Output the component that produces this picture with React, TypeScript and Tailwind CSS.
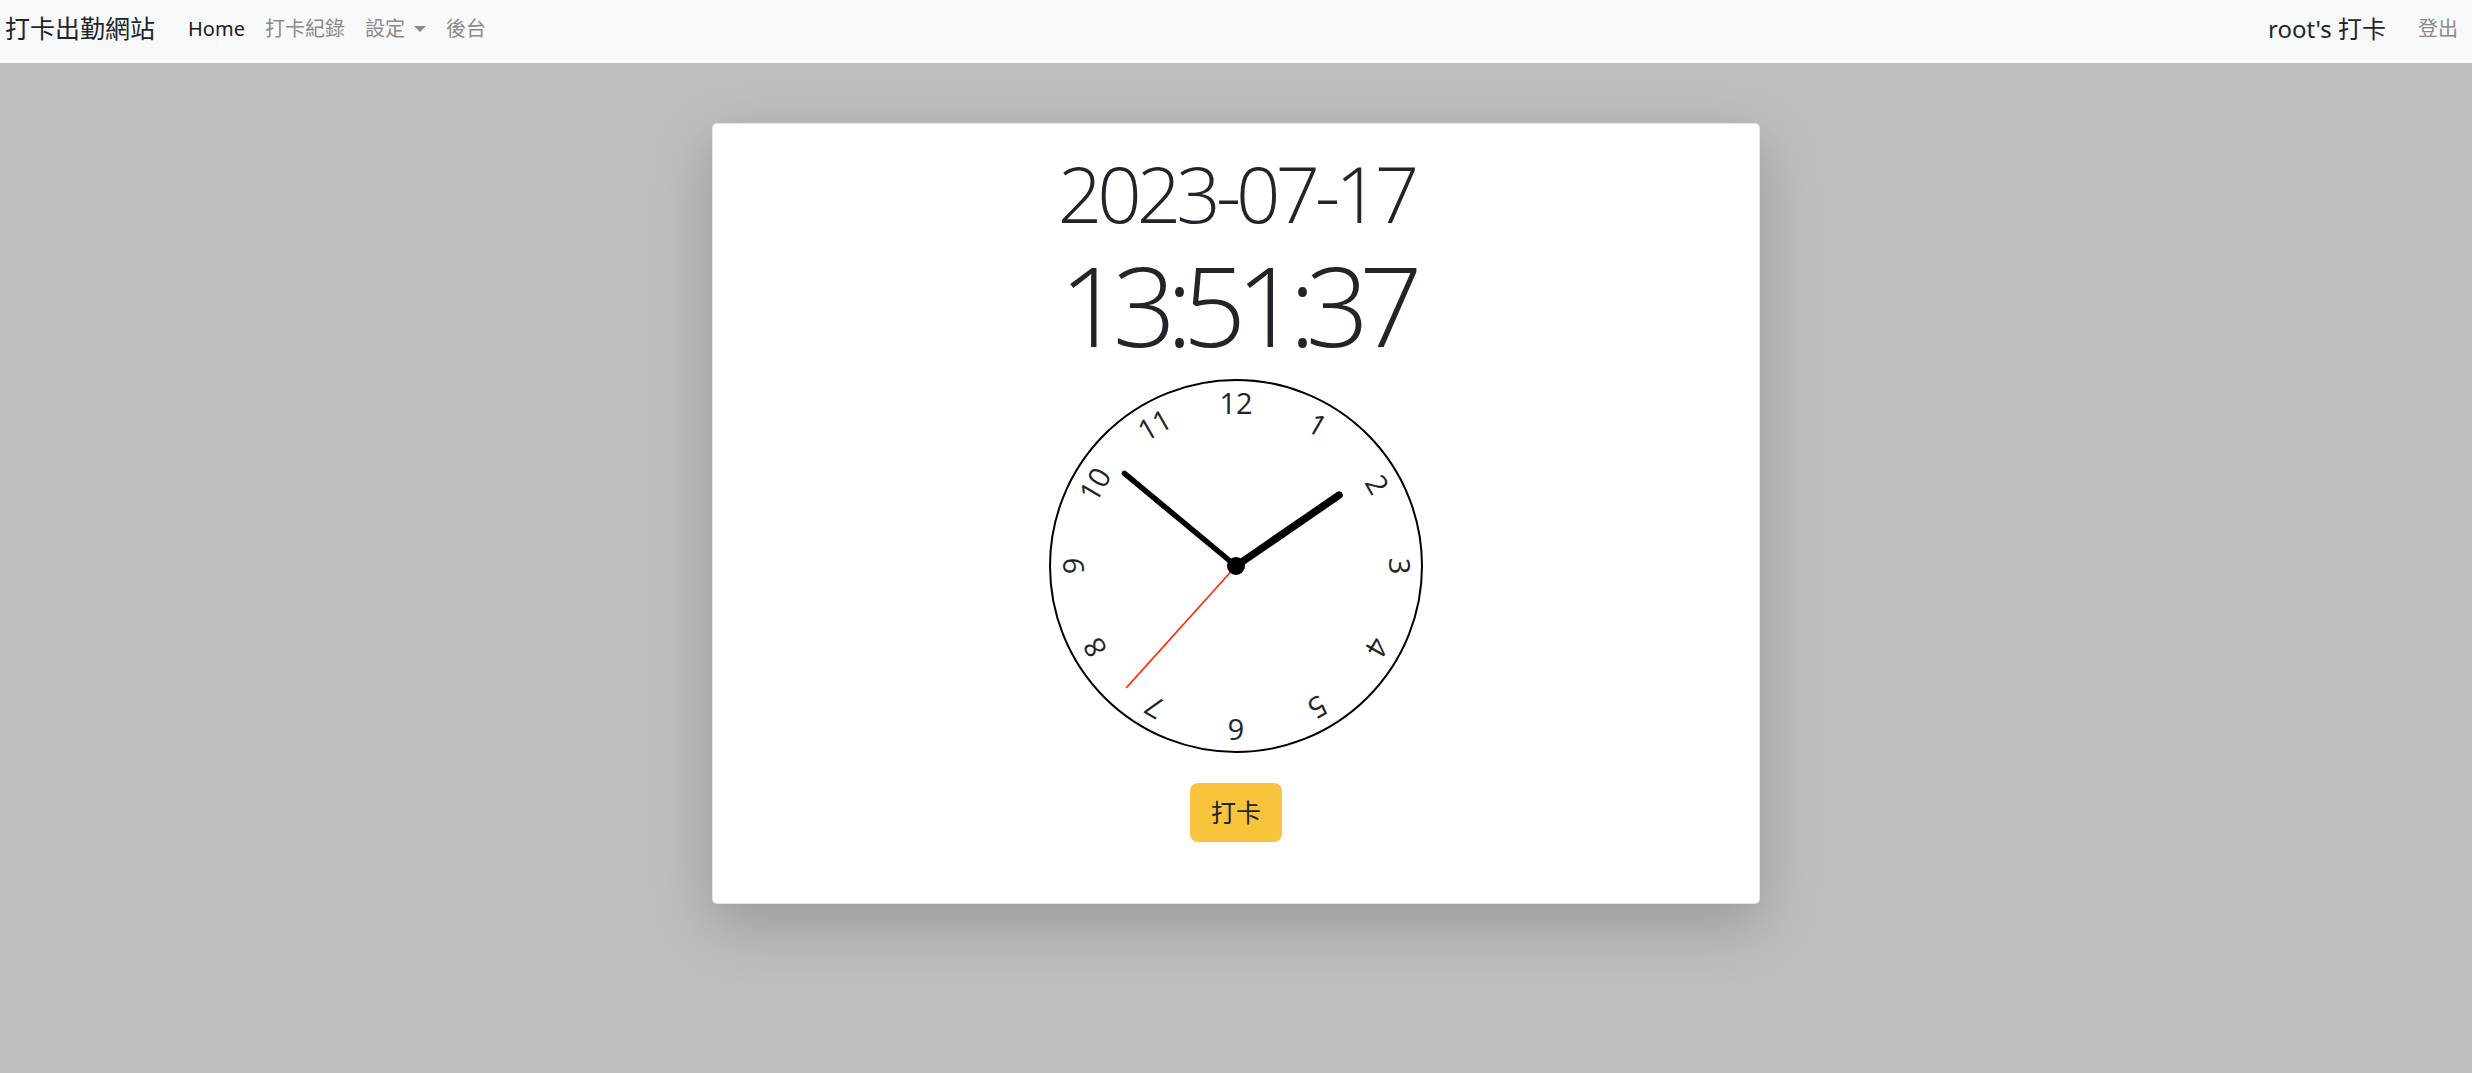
import React from "react";

const cjk = "font-['Noto_Sans','Noto_Sans_CJK_TC',sans-serif]";

// 13:51:37
const hourAngle = (13 % 12 + 51 / 60) * 30;
const minuteAngle = (51 + 37 / 60) * 6;
const secondAngle = 37 * 6;

const hand = (angle: number, len: number) => {
  const r = (angle * Math.PI) / 180;
  return { x2: Math.sin(r) * len, y2: -Math.cos(r) * len };
};

const Clock = () => {
  const h = hand(hourAngle, 125);
  const m = hand(minuteAngle, 145);
  const s = hand(secondAngle, 164);
  return (
    <svg width={376} height={376} viewBox="-188 -188 376 376" className="block">
      <circle cx={0} cy={0} r={186} fill="white" stroke="black" strokeWidth={2} />
      {Array.from({ length: 12 }, (_, i) => i + 1).map((n) => (
        <text
          key={n}
          x={0}
          y={-164}
          transform={`rotate(${n * 30})`}
          textAnchor="middle"
          dominantBaseline="central"
          fontSize={29}
          fill="#212529"
          style={{ fontFamily: "'Open Sans', sans-serif" }}
        >
          {n}
        </text>
      ))}
      <line x1={0} y1={0} x2={h.x2} y2={h.y2} stroke="black" strokeWidth={7.5} strokeLinecap="round" />
      <line x1={0} y1={0} x2={m.x2} y2={m.y2} stroke="black" strokeWidth={5.5} strokeLinecap="round" />
      <line x1={0} y1={0} x2={s.x2} y2={s.y2} stroke="#ff2a00" strokeWidth={1.6} />
      <circle cx={0} cy={0} r={9} fill="black" />
    </svg>
  );
};

export default function App() {
  return (
    <div className={`min-h-screen bg-[#bebebe] ${cjk}`}>
      {/* Navbar */}
      <nav className="h-[63px] bg-[#f8f9fa] flex items-center justify-between pb-[6px] pl-[5px] pr-[14px]">
        <div className="flex items-center">
          <span className="text-[25px] text-[#212529] mr-[23px]">打卡出勤網站</span>
          <a className="text-[20px] text-[#1a1a1a] px-[10px]">Home</a>
          <a className="text-[20px] text-[#8a8a8a] px-[10px]">打卡紀錄</a>
          <a className="text-[20px] text-[#8a8a8a] px-[10px] flex items-center">
            設定
            <span className="ml-[9px] w-0 h-0 border-x-[6px] border-x-transparent border-t-[6px] border-t-[#8a8a8a]" />
          </a>
          <a className="text-[20px] text-[#8a8a8a] px-[10px]">後台</a>
        </div>
        <div className="flex items-center gap-[32px]">
          <span className="text-[24px] text-[#212529]">root's 打卡</span>
          <a className="text-[20px] text-[#8a8a8a]">登出</a>
        </div>
      </nav>

      {/* Main */}
      <main className="pt-[60px]">
        <div className="mx-auto w-[1048px] bg-white rounded-[5px] border border-black/10 shadow-[0_20px_60px_rgba(0,0,0,0.2)] flex flex-col items-center pt-[25px] pb-[61px]">
          <div className="text-[78px] leading-[1.14] font-light text-[#212529] tracking-[-5px] font-['Open_Sans',sans-serif]">
            2023-07-17
          </div>
          <div className="mt-[11px] text-[111px] leading-none font-light text-[#212529] tracking-[-10px] font-['Open_Sans',sans-serif]">
            13:51:37
          </div>
          <div className="mt-[18px]">
            <Clock />
          </div>
          <button className="mt-[29px] h-[59px] w-[92px] rounded-[8px] bg-[#f7c43b] text-[25px] text-[#212529] flex items-center justify-center">
            打卡
          </button>
        </div>
      </main>
    </div>
  );
}
